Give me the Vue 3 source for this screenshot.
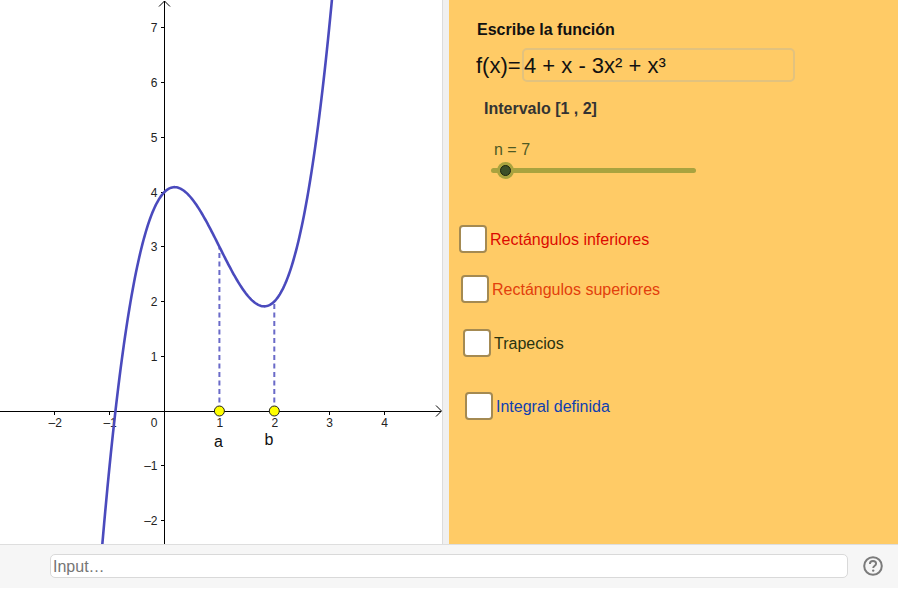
<script setup>
import { computed } from 'vue'

const ox = 164.5
const oy = 411
const ux = 54.9
const uy = 54.75
const f = x => 4 + x - 3 * x * x + x * x * x
const px = x => ox + x * ux
const py = y => oy - y * uy

const curve = computed(() => {
  const pts = []
  for (let x = -1.3; x <= 3.2; x += 0.02) {
    pts.push(`${px(x).toFixed(2)},${py(f(x)).toFixed(2)}`)
  }
  return 'M' + pts.join('L')
})

const xTicks = [-2, -1, 1, 2, 3, 4]
const yTicks = [-2, -1, 1, 2, 3, 4, 5, 6, 7]
const fmt = n => (n < 0 ? '\u2013' + -n : String(n))

const points = [
  { x: 1, name: 'a', lx: 218.5, ly: 447 },
  { x: 2, name: 'b', lx: 269, ly: 445 }
]

const options = [
  { label: 'Rectángulos inferiores', cls: 'opt-a' },
  { label: 'Rectángulos superiores', cls: 'opt-b' },
  { label: 'Trapecios', cls: 'opt-c' },
  { label: 'Integral definida', cls: 'opt-d' }
]
</script>

<template>
  <div class="applet">
    <div class="main">
      <svg class="graph" width="442" height="544" viewBox="0 0 442 544">
        <line x1="0" :y1="oy" x2="441" :y2="oy" class="axis" />
        <line :x1="ox" y1="1" :x2="ox" y2="544" class="axis" />
        <path d="M436 405.5L441.5 411L436 416.5" class="arrow" />
        <path d="M159 6.5L164.5 1L170 6.5" class="arrow" />
        <g v-for="t in xTicks" :key="'x' + t">
          <line :x1="px(t)" :y1="oy" :x2="px(t)" :y2="oy + 4" class="axis" />
          <text :x="px(t) + 0.5" :y="oy + 16" text-anchor="middle" class="tick">{{ fmt(t) }}</text>
        </g>
        <g v-for="t in yTicks" :key="'y' + t">
          <line :x1="ox - 4" :y1="py(t)" :x2="ox" :y2="py(t)" class="axis" />
          <text :x="ox - 7" :y="py(t) + 4.5" text-anchor="end" class="tick">{{ fmt(t) }}</text>
        </g>
        <text :x="ox - 7" :y="oy + 15.5" text-anchor="end" class="tick">0</text>
        <line v-for="p in points" :key="'d' + p.x" :x1="px(p.x)" :y1="oy" :x2="px(p.x)" :y2="py(f(p.x))" class="dash" />
        <path :d="curve" class="curve" />
        <g v-for="p in points" :key="p.name">
          <circle :cx="px(p.x)" :cy="oy" r="5" class="point" />
          <text :x="p.lx" :y="p.ly" text-anchor="middle" class="pname">{{ p.name }}</text>
        </g>
      </svg>
      <div class="split"></div>
      <div class="panel">
        <div class="title">Escribe la función</div>
        <div class="func">
          <span class="func-name">f(x)=</span>
          <div class="func-box">4 + x - 3x² + x³</div>
        </div>
        <div class="interval">Intervalo [1 , 2]</div>
        <div class="slider">
          <div class="slider-label">n = 7</div>
          <div class="track"><span class="knob"></span></div>
        </div>
        <div v-for="o in options" :key="o.label" class="opt" :class="o.cls">
          <span class="box"></span>
          <span class="opt-label">{{ o.label }}</span>
        </div>
      </div>
    </div>
    <div class="bar">
      <div class="input">Input…</div>
      <svg class="help" width="20" height="20" viewBox="0 0 20 20">
        <circle cx="10" cy="10" r="8.8" fill="none" stroke="#7b7b7b" stroke-width="2" />
        <path d="M6.9 7.9C6.9 6 8.3 5 10 5C11.8 5 13.1 6.1 13.1 7.7C13.1 9.6 10.2 9.9 10.2 12" fill="none" stroke="#7b7b7b" stroke-width="1.9" />
        <circle cx="10.2" cy="14.6" r="1.2" fill="#7b7b7b" />
      </svg>
    </div>
  </div>
</template>

<style>
html, body { margin: 0; background: #fff; }
</style>

<style scoped>
.applet {
  width: 898px;
  height: 588px;
  display: flex;
  flex-direction: column;
  font-family: "Liberation Sans", Arial, sans-serif;
  overflow: hidden;
}
.main { display: flex; height: 544px; flex: none; }
.graph { display: block; flex: none; background: #fff; }
.axis { stroke: #000; stroke-width: 1; shape-rendering: crispEdges; }
.arrow { fill: none; stroke: #000; stroke-width: 1; }
.tick { font-size: 12px; fill: #222; font-family: "Liberation Sans", Arial, sans-serif; }
.curve { fill: none; stroke: #4a4abd; stroke-width: 2.6; }
.dash { stroke: #6a6ac8; stroke-width: 2; stroke-dasharray: 5 3.5; }
.point { fill: #ffff00; stroke: #222; stroke-width: 1; }
.pname { font-size: 16px; fill: #111; font-family: "Liberation Sans", Arial, sans-serif; }
.split { width: 7px; flex: none; background: #f0f0f0; border-left: 1px solid #dcdcdc; box-sizing: border-box; }
.panel {
  flex: 1;
  background: #ffcb66;
  box-sizing: border-box;
  padding-top: 21px;
  min-width: 0;
}
.title { margin-left: 28px; font-size: 16px; line-height: 18px; font-weight: bold; color: #111; }
.func { display: flex; align-items: center; margin: 9px 0 0 27px; height: 34px; }
.func-name { font-size: 22px; line-height: 34px; padding-top: 2px; color: #111; width: 46px; flex: none; }
.func-box {
  width: 273px;
  height: 34px;
  box-sizing: border-box;
  border: 2px solid #e2c27e;
  border-radius: 5px;
  font-size: 22px;
  line-height: 32px;
  color: #111;
}
.interval { margin: 17px 0 0 35px; font-size: 16px; line-height: 20px; font-weight: bold; color: #333; }
.slider { margin: 21px 0 0 42px; }
.slider-label { margin-left: 3px; font-size: 16px; line-height: 20px; color: #4f5a24; }
.track { position: relative; margin-top: 8px; width: 205px; height: 5px; border-radius: 3px; background: #a9a33f; }
.knob {
  position: absolute;
  left: 9px;
  top: -3px;
  width: 11px;
  height: 11px;
  box-sizing: border-box;
  border: 1px solid #1c2410;
  border-radius: 50%;
  background: #3e4f28;
  box-shadow: 0 0 0 3px #a9a33f;
}
.opt { display: flex; align-items: center; }
.box {
  width: 28px;
  height: 28px;
  box-sizing: border-box;
  flex: none;
  background: #fff;
  border: 2px solid #a48a52;
  border-radius: 4px;
}
.opt-label { margin-left: 3px; font-size: 16px; line-height: 28px; padding-top: 2px; }
.opt-a { margin: 51px 0 0 10px; color: #dc0a00; }
.opt-b { margin: 20px 0 0 12px; color: #e2400c; }
.opt-c { margin: 24px 0 0 14px; color: #2a3310; }
.opt-d { margin: 33px 0 0 16px; color: #0f3fb0; }
.bar {
  flex: 1;
  display: flex;
  align-items: center;
  background: #f6f6f6;
  border-top: 1px solid #dedede;
  box-sizing: border-box;
  padding: 0 15px 1px 50px;
  gap: 15px;
}
.input {
  flex: 1;
  height: 24px;
  box-sizing: border-box;
  background: #fff;
  border: 1px solid #d9d9d9;
  border-radius: 5px;
  font-size: 16px;
  line-height: 23px;
  padding-left: 2px;
  color: #757575;
}
.help { flex: none; display: block; }
</style>
